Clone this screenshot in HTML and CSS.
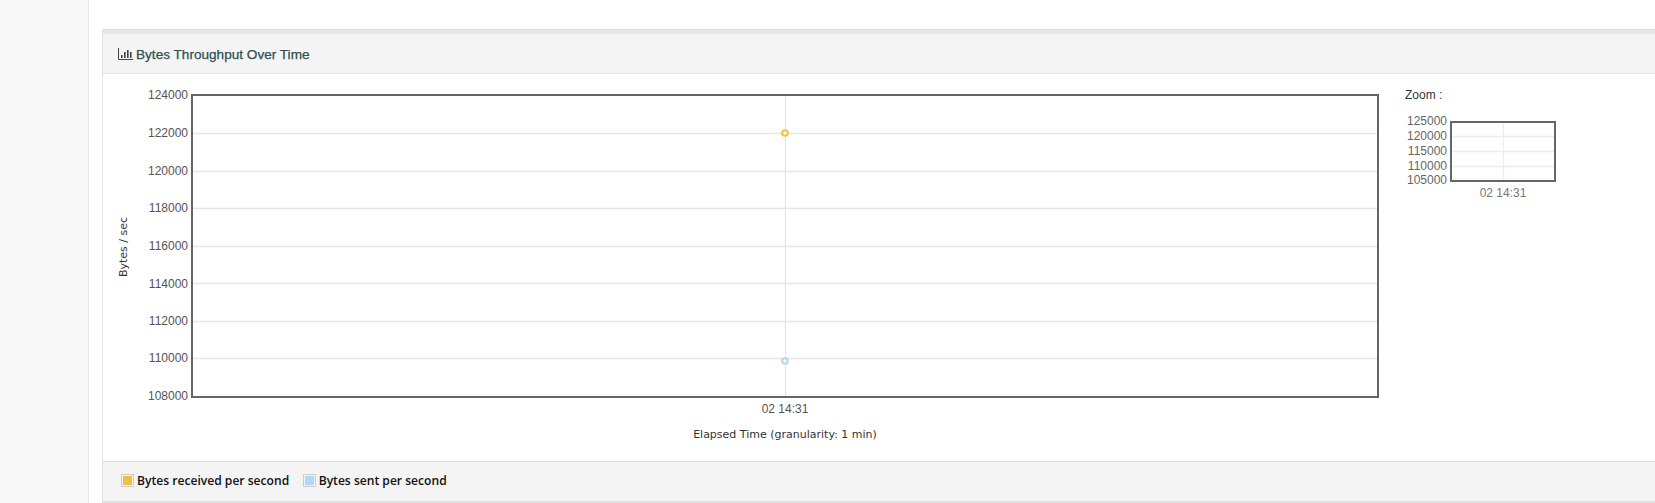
FILE: index.html
```html
<!DOCTYPE html>
<html lang="en">
<head>
<meta charset="utf-8">
<title>Bytes Throughput Over Time</title>
<link rel="stylesheet" href="styles.css">
</head>
<body>
<div class="page">
  <aside class="sidebar"></aside>
  <main class="main">
    <section class="panel">
      <header class="panel-head">
        <svg class="chart-icon" width="15" height="12" viewBox="0 0 15 12"><path d="M0.5 0v11.5H15" fill="none" stroke="#444" stroke-width="1"/><path d="M3 7h1.600v3H3zM6 4h1.600v6H6zM9 2h1.600v8H9zM12 4h1.600v6H12z" fill="#444"/></svg>
        <h2 class="panel-title">Bytes Throughput Over Time</h2>
      </header>
      <div class="panel-body">
        <svg class="plot" width="1285" height="387" viewBox="102 74 1285 387">
          <g class="grid">
            <path d="M192 133.500H1378M192 171.500H1378M192 208.500H1378M192 246.500H1378M192 283.500H1378M192 321.500H1378M192 358.500H1378M784.500 96V396"/>
          </g>
          <rect class="frame" x="191" y="95" width="1186" height="302"/>
          <g class="tick">
            <text x="187" y="99">124000</text>
            <text x="187" y="137">122000</text>
            <text x="187" y="175">120000</text>
            <text x="187" y="212">118000</text>
            <text x="187" y="250">116000</text>
            <text x="187" y="288">114000</text>
            <text x="187" y="325">112000</text>
            <text x="187" y="362">110000</text>
            <text x="187" y="400">108000</text>
          </g>
          <text class="tick-x" x="784" y="413">02 14:31</text>
          <text class="axis-title" x="784" y="438">Elapsed Time (granularity: 1 min)</text>
          <text class="axis-title" transform="translate(126 247) rotate(-90)">Bytes / sec</text>
          <circle class="pt pt-recv" cx="784" cy="133" r="2.800"/>
          <circle class="pt pt-sent" cx="784" cy="361" r="2.800"/>
        </svg>
        <div class="zoom">
          <div class="zoom-label">Zoom :</div>
          <svg class="overview" width="160" height="90" viewBox="1400 110 160 90">
            <path class="ov-grid" d="M1451 136.500H1554M1451 151.500H1554M1451 166.500H1554M1502.500 122V181"/>
            <rect class="ov-frame" x="1450" y="122" width="104" height="59"/>
            <g class="ov-tick">
              <text x="1446" y="125">125000</text>
              <text x="1446" y="140">120000</text>
              <text x="1446" y="155">115000</text>
              <text x="1446" y="170">110000</text>
              <text x="1446" y="184">105000</text>
            </g>
            <text class="ov-tick-x" x="1502" y="197">02 14:31</text>
          </svg>
        </div>
      </div>
      <footer class="panel-foot">
        <span class="legend-item"><span class="swatch swatch-recv"></span>Bytes received per second</span>
        <span class="legend-item"><span class="swatch swatch-sent"></span>Bytes sent per second</span>
      </footer>
    </section>
  </main>
</div>
</body>
</html>
```
FILE: styles.css
```css
* { box-sizing: border-box; }
html, body { margin: 0; padding: 0; height: 100%; background: #fff; overflow: hidden; }
.page { display: flex; height: 503px; font-family: "Liberation Sans", Arial, sans-serif; }
.sidebar { width: 89px; flex: none; background: #f8f8f8; border-right: 1px solid #e7e7e7; }
.main { flex: 1; min-width: 0; padding: 29px 0 0 13px; }
.panel { border: 1px solid #e2e2e2; border-right: 0; border-top: 1px solid #dcdfe2; }
.panel-head { display: flex; align-items: center; gap: 3px; height: 44px; padding: 1px 0 0 15px; background: #f4f4f4; border-top: 4px solid #e6e9ec; border-bottom: 1px solid #e7e7e7; }
.chart-icon { flex: none; }
.panel-title { margin: 0; font-size: 13.600px; font-weight: 400; color: #2f4f4f; -webkit-text-stroke: 0.25px #2f4f4f; }
.panel-body { display: flex; height: 387px; }
.plot { display: block; flex: none; }
.grid path { fill: none; stroke: #e6e6e6; stroke-width: 1.300; }
.frame { fill: none; stroke: #666; stroke-width: 2; }
.tick text { font-size: 12px; fill: #545454; text-anchor: end; }
.tick-x { font-size: 12px; fill: #545454; text-anchor: middle; }
.axis-title { font-family: "DejaVu Sans", Verdana, sans-serif; font-size: 11px; fill: #333; text-anchor: middle; }
.pt { fill: #fff; stroke-width: 2; }
.pt-recv { stroke: #edc240; }
.pt-sent { stroke: #afd8f8; }
.zoom { padding: 13px 0 0 17px; }
.zoom-label { font-size: 12px; line-height: 16px; color: #333; }
.overview { display: block; margin: 7px 0 0 -4px; }
.ov-grid { fill: none; stroke: #ececec; stroke-width: 1.300; }
.ov-frame { fill: none; stroke: #666; stroke-width: 2; }
.ov-tick text { font-size: 12px; fill: #666; text-anchor: end; }
.ov-tick-x { font-size: 12px; fill: #777; text-anchor: middle; }
.panel-foot { display: flex; align-items: center; gap: 13.500px; height: 41px; padding: 0 0 2px 18px; background: #f4f4f4; border-top: 1px solid #dedede; border-bottom: 1px solid #dedede; font-family: "Open Sans", sans-serif; font-size: 12.100px; font-weight: 600; color: #111; }
.legend-item { display: flex; align-items: center; gap: 3px; }
.swatch { width: 13px; height: 13px; border: 1px solid #ccc; padding: 1px; background-clip: content-box; }
.swatch-recv { background-color: #edc240; }
.swatch-sent { background-color: #afd8f8; }
```
